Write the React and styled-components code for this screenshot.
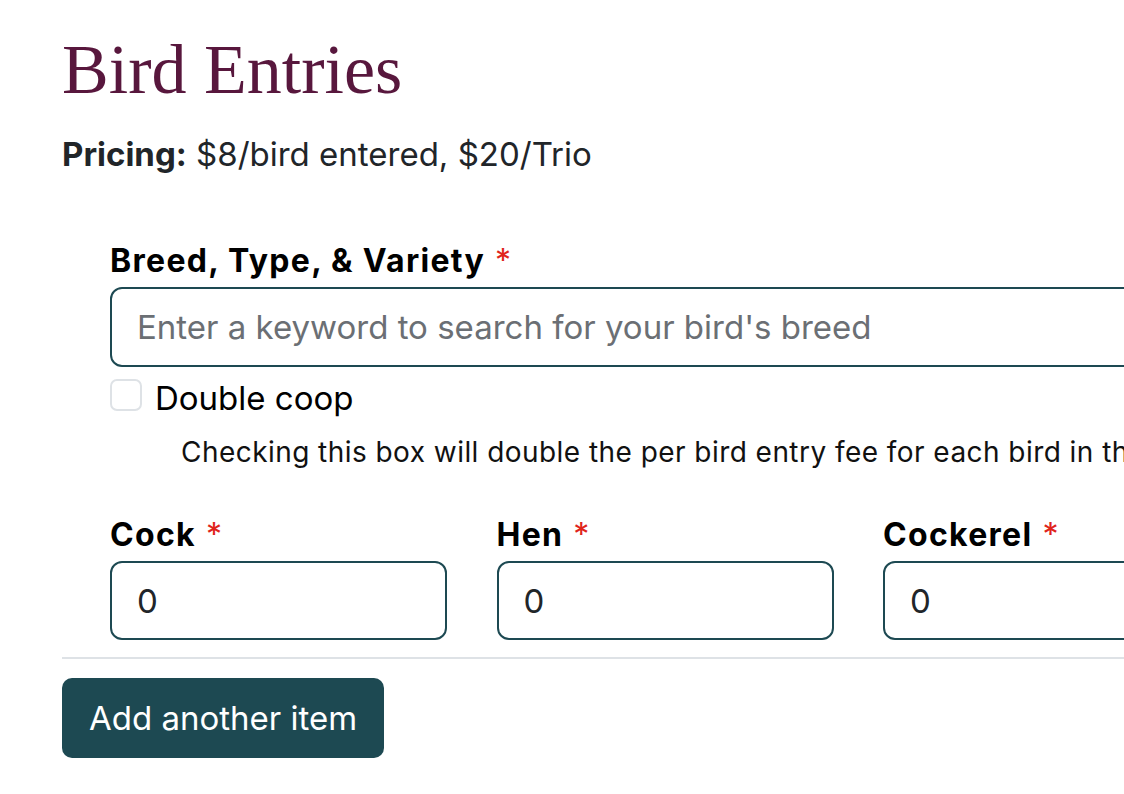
import React from "react";
import styled, { createGlobalStyle } from "styled-components";

const Global = createGlobalStyle`
  html, body { margin: 0; padding: 0; background: #fff; overflow: hidden; }
  body { font-family: Inter, "Liberation Sans", sans-serif; color: #212529; }
  * { box-sizing: border-box; }
`;

const Page = styled.div`
  width: 1500px;
  padding: 24px 0 0 62px;
`;

const Title = styled.h1`
  margin: 0;
  font-family: "Liberation Serif", serif;
  font-weight: 400;
  font-size: 70px;
  line-height: 92px;
  color: #58173d;
`;

const Pricing = styled.p`
  margin: 14px 0 0;
  font-size: 33px;
  line-height: 48px;
  color: #212529;
  strong { font-weight: 700; }
`;

const Item = styled.div`
  padding: 62px 0 0 48px;
`;

const Field = styled.div`
  display: flex;
  flex-direction: column;
`;

const Label = styled.label`
  font-size: 32px;
  font-weight: 700;
  letter-spacing: 1.3px;
  line-height: 42px;
  color: #000;
  margin-bottom: 5px;
`;

const Req = styled.span`
  color: #e0241b;
  font-weight: 400;
  letter-spacing: 0;
  margin-left: 10px;
`;

const Input = styled.input`
  width: ${(p) => p.$w};
  height: ${(p) => p.$h};
  border: 2px solid #1d4952;
  border-radius: 12px;
  padding: 0 25px;
  font-family: inherit;
  font-size: 33px;
  color: #212529;
  background: #fff;
  outline: none;
  &::placeholder { color: #6b6f74; }
`;

const CheckRow = styled.div`
  display: flex;
  align-items: flex-start;
  gap: 13px;
  margin-top: 12px;
`;

const Box = styled.span`
  width: 32px;
  height: 32px;
  flex: none;
  border: 2px solid #dee2e6;
  border-radius: 7px;
  background: #fff;
`;

const CheckText = styled.span`
  font-size: 33px;
  line-height: 38px;
  color: #000;
`;

const Help = styled.div`
  margin: 16px 0 0 71px;
  font-size: 28px;
  letter-spacing: 0.45px;
  line-height: 38px;
  color: #111;
  white-space: nowrap;
`;

const Row = styled.div`
  display: grid;
  grid-template-columns: repeat(3, 337px);
  column-gap: 49.5px;
  margin-top: 43px;
`;

const Divider = styled.hr`
  margin: 17px 0 0;
  border: 0;
  border-top: 2px solid #dee2e6;
`;

const Button = styled.button`
  margin-top: 19px;
  height: 80px;
  padding: 0 27px;
  border: 0;
  border-radius: 10px;
  background: #1d4952;
  color: #fff;
  font-family: inherit;
  font-size: 33px;
`;

export default function App() {
  return (
    <>
      <Global />
      <Page>
        <Title>Bird Entries</Title>
        <Pricing>
          <strong>Pricing:</strong> $8/bird entered, $20/Trio
        </Pricing>
        <Item>
          <Field>
            <Label>
              Breed, Type, &amp; Variety<Req>*</Req>
            </Label>
            <Input $w="1100px" $h="80px" placeholder="Enter a keyword to search for your bird's breed" />
          </Field>
          <CheckRow>
            <Box />
            <CheckText>Double coop</CheckText>
          </CheckRow>
          <Help>
            Checking this box will double the per bird entry fee for each bird in this entry.
          </Help>
          <Row>
            {["Cock", "Hen", "Cockerel"].map((n) => (
              <Field key={n}>
                <Label>
                  {n}<Req>*</Req>
                </Label>
                <Input $w="337px" $h="79px" defaultValue="0" />
              </Field>
            ))}
          </Row>
        </Item>
        <Divider />
        <Button>Add another item</Button>
      </Page>
    </>
  );
}
